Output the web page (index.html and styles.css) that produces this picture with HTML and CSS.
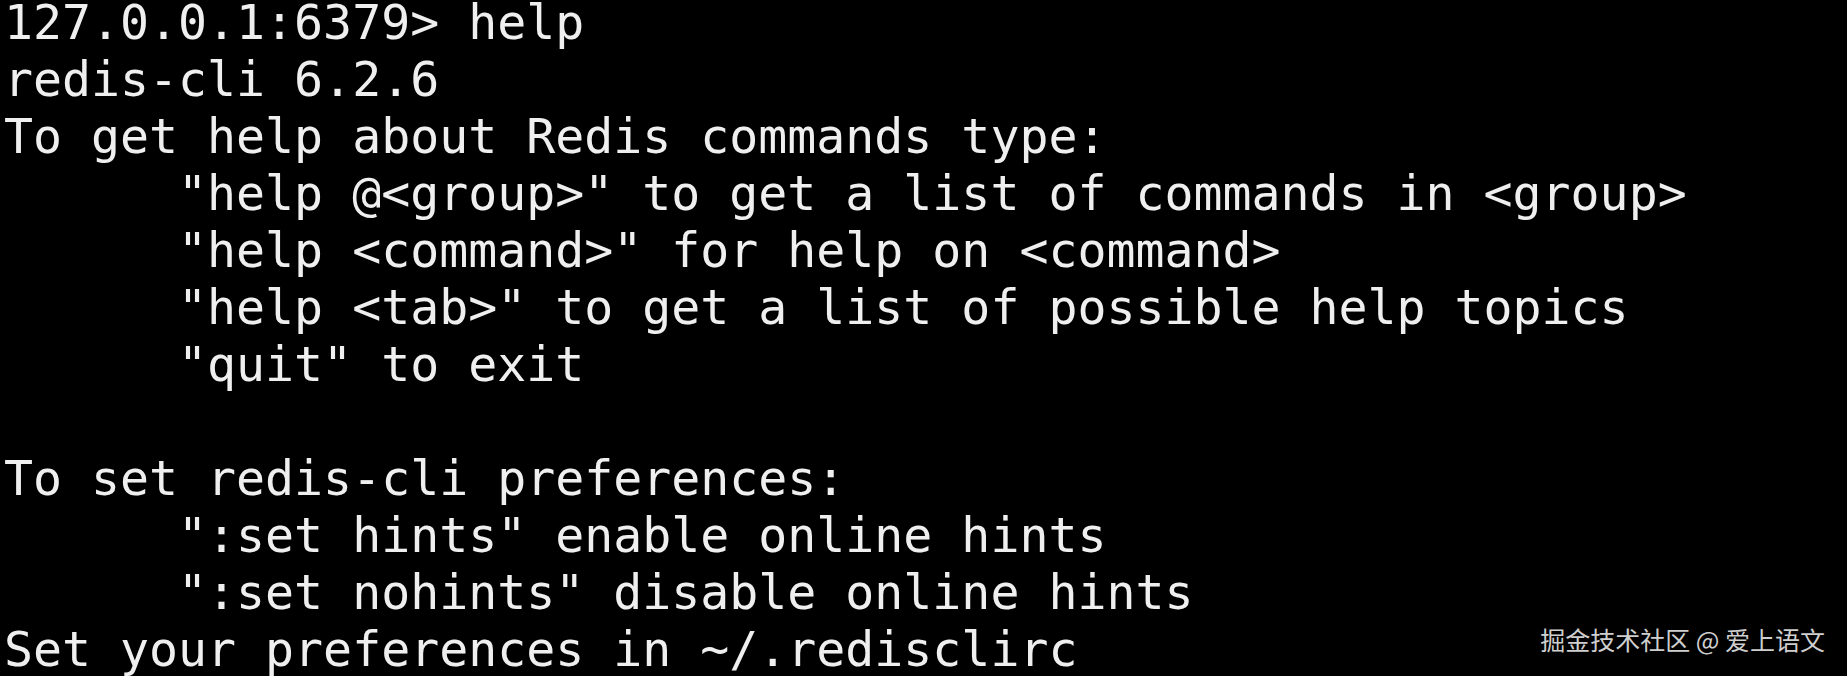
FILE: index.html
```html
<!DOCTYPE html>
<html lang="en">
<head>
<meta charset="utf-8">
<title>redis-cli help</title>
<link rel="stylesheet" href="styles.css">
</head>
<body>
<main class="terminal">
<pre class="output">127.0.0.1:6379&gt; help
redis-cli 6.2.6
To get help about Redis commands type:
      "help @&lt;group&gt;" to get a list of commands in &lt;group&gt;
      "help &lt;command&gt;" for help on &lt;command&gt;
      "help &lt;tab&gt;" to get a list of possible help topics
      "quit" to exit

To set redis-cli preferences:
      ":set hints" enable online hints
      ":set nohints" disable online hints
Set your preferences in ~/.redisclirc</pre>
<div class="watermark">掘金技术社区 @ 爱上语文</div>
</main>
</body>
</html>
```
FILE: styles.css
```css
html, body {
  margin: 0;
  padding: 0;
  background: #000;
}
.terminal {
  position: relative;
  width: 1847px;
  height: 676px;
  overflow: hidden;
  background: #000;
}
.output {
  margin: -6px 0 0 0;
  padding: 0 0 0 4px;
  font-family: "DejaVu Sans Mono", "Liberation Mono", monospace;
  font-size: 48.2px;
  line-height: 57px;
  color: #efefef;
  white-space: pre;
}
.watermark {
  position: absolute;
  right: 22px;
  bottom: 22px;
  font-family: "Noto Sans CJK SC", "Noto Sans", sans-serif;
  font-size: 25px;
  line-height: 30px;
  color: #cfcfcf;
  white-space: nowrap;
}
```
